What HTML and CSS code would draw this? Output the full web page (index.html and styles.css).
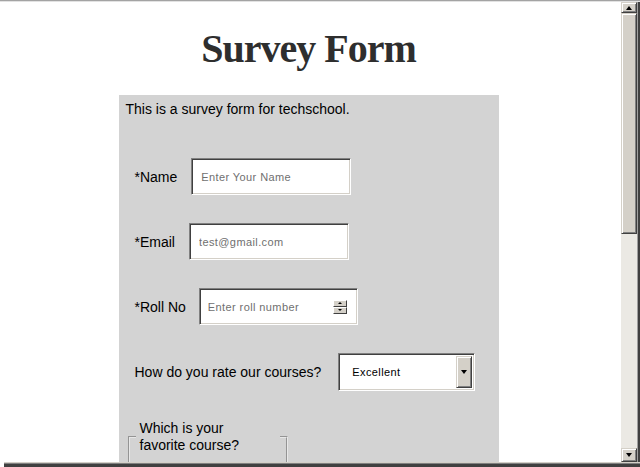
FILE: index.html
```html
<!DOCTYPE html>
<html lang="en">
<head>
<meta charset="utf-8">
<title>Survey Form</title>
<link rel="stylesheet" href="styles.css">
</head>
<body>
<div class="window">
  <div class="edge-top"></div>
  <div class="main">
    <div class="viewport">
      <main class="page">
        <h1 class="title">Survey Form</h1>
        <form class="survey">
          <p class="intro">This is a survey form for techschool.</p>
          <div class="row row-first">
            <label class="label" for="name">*Name</label>
            <input class="text-input" id="name" type="text" placeholder="Enter Your Name">
          </div>
          <div class="row">
            <label class="label" for="email">*Email</label>
            <input class="text-input" id="email" type="email" placeholder="test@gmail.com">
          </div>
          <div class="row">
            <label class="label label-roll" for="roll">*Roll No</label>
            <div class="number-field">
              <input class="bare-input" id="roll" type="text" placeholder="Enter roll number">
              <span class="spin">
                <span class="spin-btn"><span class="tri-up tri-small"></span></span>
                <span class="spin-btn"><span class="tri-down tri-small"></span></span>
              </span>
            </div>
          </div>
          <div class="row">
            <label class="label label-rate" for="rate">How do you rate our courses?</label>
            <div class="select-field">
              <select class="bare-select" id="rate">
                <option>Excellent</option>
                <option>Good</option>
                <option>Average</option>
              </select>
              <span class="drop-btn"><span class="tri-down"></span></span>
            </div>
          </div>
          <fieldset class="courses">
            <legend class="courses-legend">Which is your favorite course?</legend>
          </fieldset>
        </form>
      </main>
    </div>
    <div class="scrollbar">
      <div class="sb-btn sb-up"><span class="tri-up"></span></div>
      <div class="sb-thumb"></div>
      <div class="sb-track"></div>
      <div class="sb-btn sb-down"><span class="tri-down"></span></div>
    </div>
    <div class="edge-right"></div>
  </div>
  <div class="edge-bottom"></div>
</div>
</body>
</html>
```

FILE: styles.css
```css
html, body {
  margin: 0;
  padding: 0;
  background: #ffffff;
}

.window {
  width: 640px;
  height: 467px;
  overflow: hidden;
  display: flex;
  flex-direction: column;
  background: #ffffff;
}

.edge-top {
  height: 2px;
  flex: none;
  background: linear-gradient(#a3a3a3 0 1px, #e2e2e2 1px 2px);
}

.main {
  height: 460px;
  flex: none;
  display: flex;
}

.viewport {
  width: 621px;
  flex: none;
  overflow: hidden;
  background: #ffffff;
}

.page {
  width: 617px;
  padding-right: 4px;
  font-family: "Liberation Sans", Arial, sans-serif;
}

.title {
  margin: 24px 0 23px;
  font-family: "Liberation Serif", "Times New Roman", serif;
  font-weight: bold;
  font-size: 40px;
  line-height: 46px;
  letter-spacing: -1px;
  text-align: center;
  color: #2e2e2e;
}

.survey {
  width: 380px;
  margin: 0 auto;
  padding: 6px 0 0;
  background: #d3d3d3;
  height: 400px;
  box-sizing: border-box;
}

.intro {
  margin: 0 0 0 7px;
  font-size: 14px;
  line-height: 16px;
  color: #000;
}

.row {
  display: flex;
  align-items: center;
  padding-left: 16px;
  margin-top: 28px;
}

.row-first {
  margin-top: 41px;
}

.label {
  font-size: 14px;
  line-height: 16px;
  color: #000;
  margin-right: 14px;
}

.label-roll {
  margin-right: 13px;
}

.label-rate {
  margin-right: 17px;
}

.text-input,
.number-field,
.select-field {
  box-sizing: border-box;
  height: 37px;
  width: 160px;
  background: #ffffff;
  border-style: solid;
  border-width: 1px;
  border-color: #808080 #ffffff #ffffff #808080;
  box-shadow: inset 1px 1px 0 #404040, inset -1px -1px 0 #d4d0c8;
}

.text-input {
  padding: 0 0 0 9px;
  margin: 0;
  font-family: "Liberation Sans", Arial, sans-serif;
  font-size: 11px;
  letter-spacing: 0.4px;
  color: #000;
  outline: none;
}

.text-input::placeholder,
.bare-input::placeholder {
  color: #6f6f6f;
  opacity: 1;
}

.number-field {
  width: 159px;
  display: flex;
  align-items: center;
}

.bare-input {
  flex: 1;
  min-width: 0;
  border: 0;
  background: transparent;
  padding: 0 0 0 8px;
  margin: 0;
  font-family: "Liberation Sans", Arial, sans-serif;
  font-size: 11px;
  letter-spacing: 0.4px;
  outline: none;
}

.spin {
  display: flex;
  flex-direction: column;
  width: 14px;
  margin-right: 10px;
  flex: none;
}

.spin-btn {
  box-sizing: border-box;
  height: 7px;
  display: flex;
  align-items: center;
  justify-content: center;
  background: #d4d0c8;
  border-style: solid;
  border-width: 1px;
  border-color: #ffffff #404040 #404040 #ffffff;
}

.select-field {
  width: 137px;
  height: 38px;
  display: flex;
  align-items: stretch;
  padding: 2px;
}

.bare-select {
  flex: 1;
  min-width: 0;
  appearance: none;
  -webkit-appearance: none;
  border: 0;
  background: transparent;
  padding: 0 0 0 11px;
  margin: 0;
  font-family: "Liberation Sans", Arial, sans-serif;
  font-size: 11px;
  letter-spacing: 0.4px;
  color: #000;
  outline: none;
}

.drop-btn {
  box-sizing: border-box;
  width: 16px;
  display: flex;
  align-items: center;
  justify-content: center;
  background: #d4d0c8;
  border-style: solid;
  border-width: 1px;
  border-color: #d4d0c8 #404040 #404040 #d4d0c8;
  box-shadow: inset 1px 1px 0 #ffffff, inset -1px -1px 0 #808080;
}

.tri-up,
.tri-down {
  width: 0;
  height: 0;
  border-left: 3.5px solid transparent;
  border-right: 3.5px solid transparent;
}

.tri-up {
  border-bottom: 4px solid #000;
}

.tri-down {
  border-top: 4px solid #000;
}

.tri-small {
  border-left-width: 2px;
  border-right-width: 2px;
}

.tri-small.tri-up {
  border-bottom-width: 2px;
}

.tri-small.tri-down {
  border-top-width: 2px;
}

.courses {
  box-sizing: border-box;
  width: 160px;
  margin: 29px 0 0 9px;
  padding: 0 0 0 6px;
  min-height: 80px;
  border: 2px groove #e8e8e8;
}

.courses-legend {
  width: 125px;
  padding: 0 15px 0 4px;
  font-size: 14px;
  line-height: 17px;
  color: #000;
}

.scrollbar {
  width: 16px;
  flex: none;
  display: flex;
  flex-direction: column;
  background: #ebe9e4;
}

.sb-btn {
  box-sizing: border-box;
  flex: none;
  display: flex;
  align-items: center;
  justify-content: center;
  background: #d4d0c8;
  border-style: solid;
  border-width: 1px;
  border-color: #d4d0c8 #404040 #404040 #d4d0c8;
  box-shadow: inset 1px 1px 0 #ffffff, inset -1px -1px 0 #808080;
}

.sb-up {
  height: 11px;
}

.sb-down {
  height: 14px;
}

.sb-thumb {
  box-sizing: border-box;
  flex: none;
  height: 221px;
  background: #d4d0c8;
  border-style: solid;
  border-width: 1px;
  border-color: #d4d0c8 #404040 #404040 #d4d0c8;
  box-shadow: inset 1px 1px 0 #ffffff, inset -1px -1px 0 #808080;
}

.sb-track {
  flex: 1;
}

.edge-right {
  width: 1px;
  flex: none;
  background: #404040;
  border-left: 1px solid #a0a0a0;
  border-right: 1px solid #404040;
}

.edge-bottom {
  height: 5px;
  flex: none;
  margin-left: 4px;
  background: linear-gradient(#d4d0c8 0 1px, #808080 1px 2px, #404040 2px);
}
```
